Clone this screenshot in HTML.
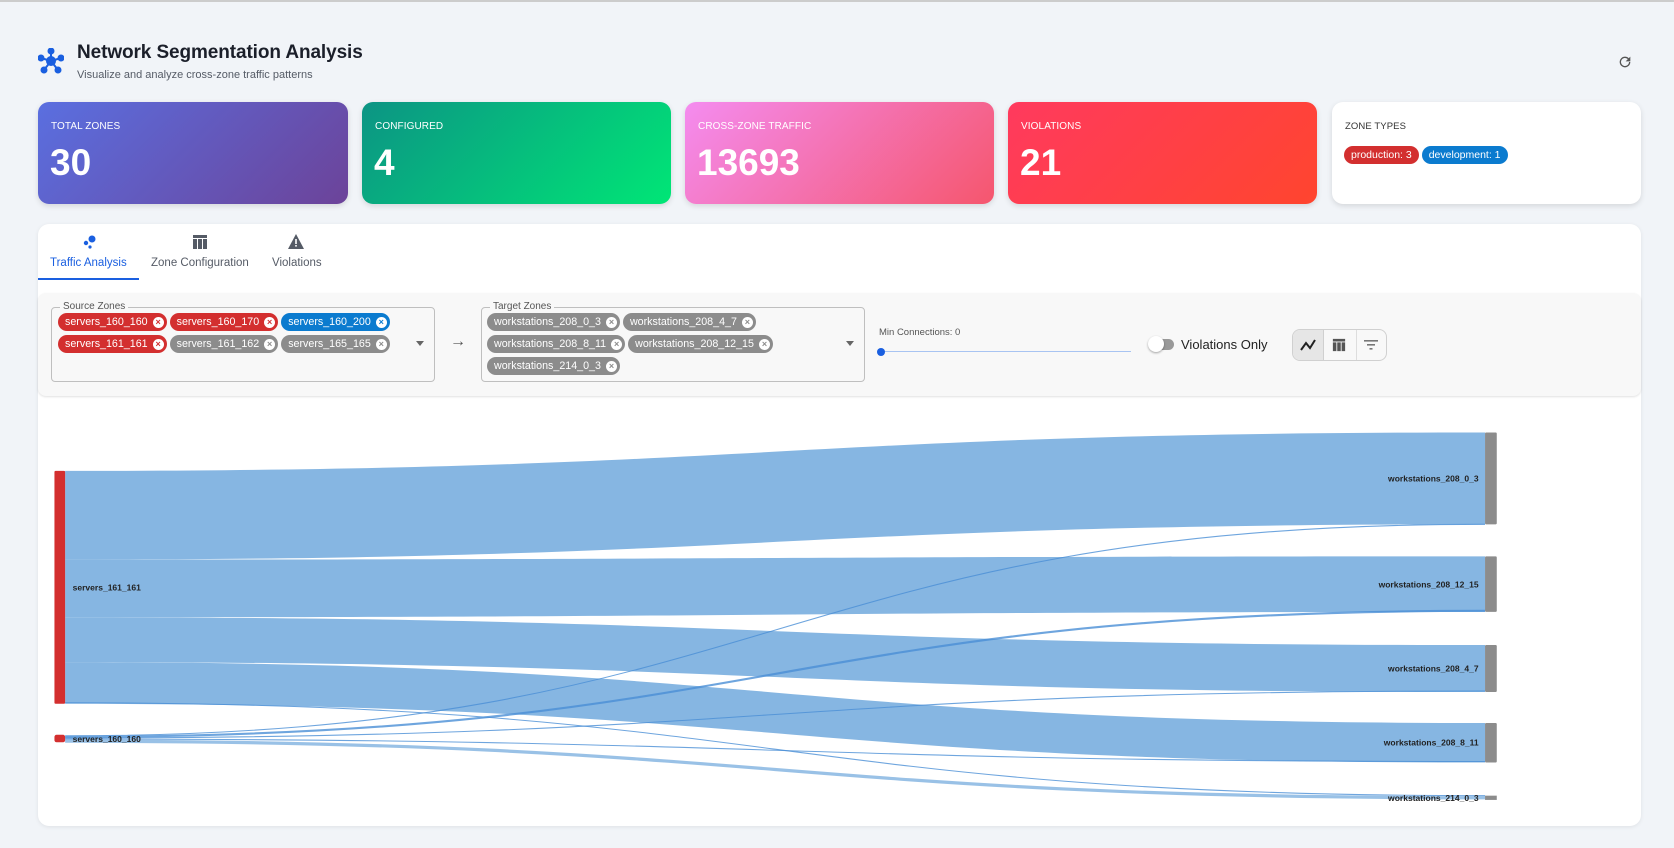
<!DOCTYPE html>
<html><head><meta charset="utf-8"><style>
*{box-sizing:border-box;margin:0;padding:0}
body{width:1674px;height:846px;background:#f1f4f8;font-family:"Liberation Sans",sans-serif;position:relative;overflow:hidden;border-top:2px solid #ccc}
.abs{position:absolute}
.card{position:absolute;top:100px;height:102px;border-radius:11px;color:#fff;box-shadow:0 2px 6px rgba(0,0,0,.12)}
.card .l{position:absolute;left:13px;top:19px;font-size:10px;letter-spacing:.1px}
.card .n{position:absolute;left:12px;top:40px;font-size:37px;font-weight:bold}
.row{white-space:nowrap;height:22px}
.chip{display:inline-flex;align-items:center;height:18px;line-height:18px;border-radius:9px;color:#fff;font-size:10.7px;padding:0 3px 0 7px;margin:0 3px 4px 0;white-space:nowrap;vertical-align:top}
.chip i{display:inline-block;width:11px;height:11px;border-radius:50%;background:#fff;margin-left:5px;position:relative;font-style:normal;font-size:9px;line-height:11px;text-align:center;font-weight:bold}
.r{background:#d32f2f}.r i{color:#d32f2f}.b{background:#0b7bcf}.b i{color:#0b7bcf}.g{background:#8c8c8c}.g i{color:#8c8c8c}
.box{position:absolute;border:1px solid #bfbfbf;border-radius:4px}
.legend{position:absolute;top:-7px;left:8px;background:#f8f8f8;padding:0 3px;font-size:10px;color:#555}
</style></head><body>
<svg class="abs" style="left:38px;top:46px" width="26" height="26" viewBox="0 0 26 26"><g fill="#1a5fe0" stroke="#1a5fe0" stroke-width="2"><line x1="13" y1="13" x2="13" y2="3"/><line x1="13" y1="13" x2="3" y2="10"/><line x1="13" y1="13" x2="23" y2="10"/><line x1="13" y1="13" x2="6" y2="22"/><line x1="13" y1="13" x2="20" y2="22"/><circle cx="13" cy="13" r="4"/><circle cx="13" cy="3" r="2.5"/><circle cx="3" cy="10" r="2.5"/><circle cx="23" cy="10" r="2.5"/><circle cx="6" cy="22" r="2.5"/><circle cx="20" cy="22" r="2.5"/></g></svg>
<div class="abs" style="left:77px;top:40px;font-size:19px;font-weight:bold;color:#1b1f2a;letter-spacing:-.1px">Network Segmentation Analysis</div>
<div class="abs" style="left:77px;top:67px;font-size:11px;color:#555b66">Visualize and analyze cross-zone traffic patterns</div>
<svg class="abs" style="left:1617px;top:52px" width="16" height="16" viewBox="0 0 24 24"><path d="M17.65 6.35A7.96 7.96 0 0012 4a8 8 0 108 8h-2a6 6 0 11-1.76-4.24L13 11h7V4z" fill="#555"/></svg>

<div class="card" style="left:38px;width:310px;background:linear-gradient(135deg,#5a6fe0,#6c4399)"><div class="l">TOTAL ZONES</div><div class="n">30</div></div>
<div class="card" style="left:362px;width:309px;background:linear-gradient(135deg,#0c9484,#00e676)"><div class="l">CONFIGURED</div><div class="n">4</div></div>
<div class="card" style="left:685px;width:309px;background:linear-gradient(135deg,#f48cf0,#f5566d)"><div class="l">CROSS-ZONE TRAFFIC</div><div class="n">13693</div></div>
<div class="card" style="left:1008px;width:309px;background:linear-gradient(135deg,#ff3a5e,#ff452e)"><div class="l">VIOLATIONS</div><div class="n">21</div></div>
<div class="card" style="left:1332px;width:309px;background:#fff;color:#333"><div class="l" style="font-size:9.5px">ZONE TYPES</div>
<div class="abs" style="left:12px;top:44px;white-space:nowrap"><span class="chip r" style="padding:0 7px;font-size:10.5px">production: 3</span><span class="chip b" style="padding:0 7px;font-size:10.5px">development: 1</span></div></div>

<div class="abs" style="left:38px;top:222px;width:1603px;height:602px;background:#fff;border-radius:11px;box-shadow:0 1px 4px rgba(0,0,0,.08)">
 <svg class="abs" style="left:44px;top:10px" width="16" height="16" viewBox="0 0 16 16"><circle cx="10" cy="5" r="3.5" fill="#1a5fe0"/><circle cx="4" cy="9" r="2.2" fill="#1a5fe0"/><circle cx="8" cy="13" r="1.6" fill="#1a5fe0"/></svg>
 <div class="abs" style="left:12px;top:33px;font-size:11.5px;color:#1a5fe0">Traffic Analysis</div>
 <div class="abs" style="left:0;top:54px;width:101px;height:2px;background:#1a5fe0"></div>
 <svg class="abs" style="left:154px;top:10px" width="16" height="16" viewBox="0 0 16 16" fill="#555b66"><rect x="1" y="1" width="14" height="3"/><rect x="1" y="5" width="4" height="10"/><rect x="6" y="5" width="4" height="10"/><rect x="11" y="5" width="4" height="10"/></svg>
 <div class="abs" style="left:113px;top:33px;font-size:11.5px;color:#555b66">Zone Configuration</div>
 <svg class="abs" style="left:249px;top:9px" width="18" height="17" viewBox="0 0 18 17"><path d="M9 1L17 16H1z" fill="#555b66"/><rect x="8.2" y="6" width="1.6" height="5" fill="#fff"/><rect x="8.2" y="12" width="1.6" height="1.6" fill="#fff"/></svg>
 <div class="abs" style="left:234px;top:33px;font-size:11.5px;color:#555b66">Violations</div>
 <div class="abs" style="left:0;top:69px;width:1603px;height:103px;background:#f8f8f8;border-radius:8px;box-shadow:0 1px 2px rgba(0,0,0,.12)">
  <div class="box" style="left:13px;top:14px;width:384px;height:75px"><div class="legend">Source Zones</div>
   <div class="abs" style="left:6px;top:5px;width:360px"><div class="row"><span class="chip r">servers_160_160<i>×</i></span><span class="chip r">servers_160_170<i>×</i></span><span class="chip b">servers_160_200<i>×</i></span></div><div class="row"><span class="chip r">servers_161_161<i>×</i></span><span class="chip g">servers_161_162<i>×</i></span><span class="chip g">servers_165_165<i>×</i></span></div></div>
   <div class="abs" style="left:364px;top:33px;width:0;height:0;border:4px solid transparent;border-top:5px solid #666"></div></div>
  <div class="abs" style="left:412px;top:40px;font-size:16px;color:#555">→</div>
  <div class="box" style="left:443px;top:14px;width:384px;height:75px"><div class="legend">Target Zones</div>
   <div class="abs" style="left:5px;top:5px;width:360px"><div class="row"><span class="chip g">workstations_208_0_3<i>×</i></span><span class="chip g">workstations_208_4_7<i>×</i></span></div><div class="row"><span class="chip g">workstations_208_8_11<i>×</i></span><span class="chip g">workstations_208_12_15<i>×</i></span></div><div class="row"><span class="chip g">workstations_214_0_3<i>×</i></span></div></div>
   <div class="abs" style="left:364px;top:33px;width:0;height:0;border:4px solid transparent;border-top:5px solid #666"></div></div>
  <div class="abs" style="left:841px;top:34px;font-size:9.5px;color:#555">Min Connections: 0</div>
  <div class="abs" style="left:843px;top:58px;width:250px;height:1px;background:#a8c4f2"></div>
  <div class="abs" style="left:839px;top:55px;width:8px;height:8px;border-radius:50%;background:#1a5fe0"></div>
  <div class="abs" style="left:1114px;top:46px;width:22px;height:11px;border-radius:6px;background:#999"></div>
  <div class="abs" style="left:1110px;top:43px;width:16px;height:16px;border-radius:50%;background:#fff;box-shadow:0 1px 2px rgba(0,0,0,.35)"></div>
  <div class="abs" style="left:1143px;top:44px;font-size:13px;color:#222">Violations Only</div>
  <div class="abs" style="left:1254px;top:36px;width:95px;height:32px;border:1px solid #d0d0d0;border-radius:8px;overflow:hidden;background:#f8f8f8">
   <div class="abs" style="left:0;top:0;width:31px;height:32px;background:#e6e6e6;border-right:1px solid #d0d0d0"></div>
   <div class="abs" style="left:63px;top:0;width:1px;height:32px;background:#ddd"></div>
   <svg class="abs" style="left:7px;top:8px" width="16" height="14" viewBox="0 0 16 14"><path d="M1 12L6 5l4 5 5-8" stroke="#222" stroke-width="2" fill="none"/></svg>
   <svg class="abs" style="left:39px;top:8px" width="14" height="14" viewBox="0 0 16 16" fill="#555"><rect x="1" y="1" width="14" height="3"/><rect x="1" y="5" width="4" height="10"/><rect x="6" y="5" width="4" height="10"/><rect x="11" y="5" width="4" height="10"/></svg>
   <svg class="abs" style="left:71px;top:9px" width="14" height="12" viewBox="0 0 14 12" fill="#777"><rect x="0" y="1" width="14" height="1.6"/><rect x="3" y="5" width="8" height="1.6"/><rect x="5.5" y="9" width="3" height="1.6"/></svg>
  </div>
 </div>
</div>

<svg class="abs" style="left:0;top:0" width="1674" height="846" viewBox="0 0 1568 792" preserveAspectRatio="none">
<g fill="#7fb2e0" fill-opacity=".95">
<path d="M61,439 C726,439 726,403 1391,403 L1391,489 C726,489 726,522 61,522Z"/>
<path d="M61,522 C726,522 726,519 1391,519 L1391,571 C726,571 726,576 61,576Z"/>
<path d="M61,576 C726,576 726,602 1391,602 L1391,646 C726,646 726,618 61,618Z"/>
<path d="M61,618 C726,618 726,675 1391,675 L1391,712 C726,712 726,657 61,657Z"/>
</g>
<g fill="none" stroke="#4a8fd6" stroke-opacity=".8">
<path d="M61,687 C726,687 726,489 1391,489" stroke-width="1"/>
<path d="M61,688 C726,688 726,570 1391,570" stroke-width="2"/>
<path d="M61,689 C726,689 726,645 1391,645" stroke-width="1"/>
<path d="M61,690 C726,690 726,711 1391,711" stroke-width="1"/>
<path d="M61,692 C726,692 726,745 1391,745" stroke-width="3" stroke="#7fb2e0"/>
<path d="M61,656 C726,656 726,743 1391,743" stroke-width="1"/>
</g>
<rect x="51" y="439" width="10" height="218" fill="#d32f2f" rx="1"/>
<rect x="51" y="686" width="10" height="7" fill="#d32f2f" rx="2"/>
<g fill="#8c8c8c"><rect x="1391" y="403" width="11" height="86" rx="1"/><rect x="1391" y="519" width="11" height="52" rx="1"/><rect x="1391" y="602" width="11" height="44" rx="1"/><rect x="1391" y="675" width="11" height="37" rx="1"/><rect x="1391" y="743" width="11" height="4"/></g>
<g font-family="Liberation Sans,sans-serif" font-size="8" font-weight="bold" fill="#222">
<text x="68" y="551">servers_161_161</text><text x="68" y="693">servers_160_160</text>
<g text-anchor="end"><text x="1385" y="449">workstations_208_0_3</text><text x="1385" y="548">workstations_208_12_15</text><text x="1385" y="627">workstations_208_4_7</text><text x="1385" y="696">workstations_208_8_11</text><text x="1385" y="748">workstations_214_0_3</text></g>
</g>
</svg>
</body></html>
